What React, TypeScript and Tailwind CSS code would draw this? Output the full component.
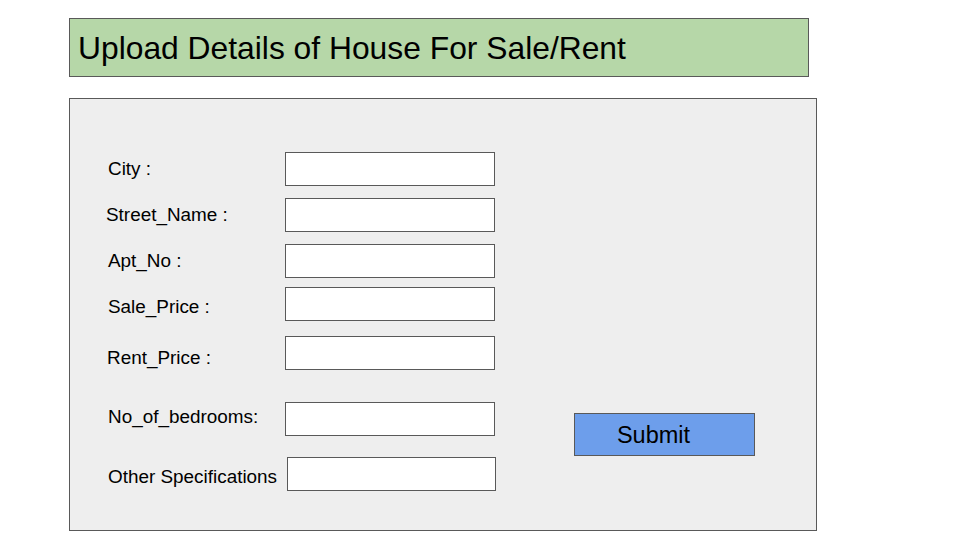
import React from 'react';

type Field = {
  label: string;
  gap: string; // space above the row
  labelPad: string; // nudges the label against its box
  labelWidth?: string;
  inputShift?: string;
};

const fields: Field[] = [
  { label: 'City :', gap: 'mt-0', labelPad: 'pt-[6px]' },
  { label: 'Street_Name :', gap: 'mt-[12px]', labelPad: 'pt-[6px]', labelWidth: '-ml-[2px] w-[179px]' },
  { label: 'Apt_No :', gap: 'mt-[12px]', labelPad: 'pt-[6px]' },
  { label: 'Sale_Price :', gap: 'mt-[9px]', labelPad: 'pt-[9px]' },
  { label: 'Rent_Price :', gap: 'mt-[15px]', labelPad: 'pt-[11px]', labelWidth: '-ml-[1px] w-[178px]' },
  { label: 'No_of_bedrooms:', gap: 'mt-[32px]', labelPad: 'pt-[4px]' },
  { label: 'Other Specifications', gap: 'mt-[21px]', labelPad: 'pt-[9px]', inputShift: 'ml-[2px] w-[209px]' },
];

export default function App() {
  return (
    <div
      className="w-[960px] h-[540px] bg-white pl-[69px] pt-[18px] text-black"
      style={{ fontFamily: '"Liberation Sans", Arial, sans-serif' }}
    >
      {/* Title bar */}
      <div className="w-[740px] h-[59px] bg-[#b6d7a8] border border-[#595959] flex items-center pl-[8px]">
        <h1 className="text-[31.8px] leading-none pt-[3px]">Upload Details of House For Sale/Rent</h1>
      </div>

      {/* Form panel */}
      <div className="mt-[21px] w-[748px] h-[433px] bg-[#eeeeee] border border-[#595959] flex pt-[53px] pl-[38px]">
        <div className="flex flex-col">
          {fields.map((f) => (
            <div key={f.label} className={`flex items-start ${f.gap}`}>
              <label className={`text-[18.9px] leading-[22px] ${f.labelPad} ${f.labelWidth ?? 'w-[177px]'}`}>
                {f.label}
              </label>
              <input
                type="text"
                className={`h-[34px] bg-white border border-[#595959] outline-none ${f.inputShift ?? 'w-[210px]'}`}
              />
            </div>
          ))}
        </div>
        <div className="ml-[78px] mt-[261px]">
          <button className="w-[181px] h-[43px] bg-[#6d9eeb] border border-[#595959] text-[23.5px] leading-none flex items-center justify-center pr-[22px] pt-[2px]">
            Submit
          </button>
        </div>
      </div>
    </div>
  );
}
